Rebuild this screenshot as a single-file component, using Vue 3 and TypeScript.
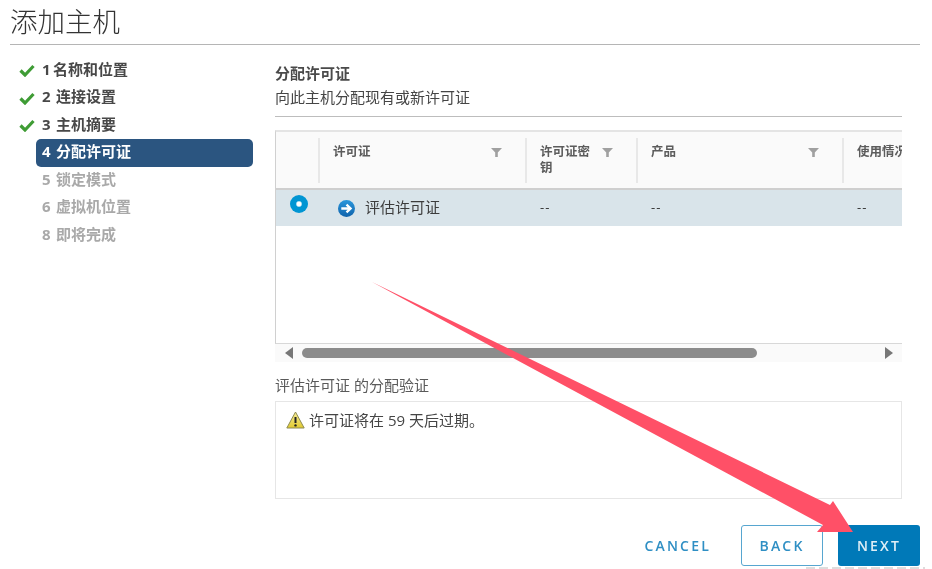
<script setup lang="ts">
interface Step { label: string; state: 'done' | 'active' | 'todo' }
const steps: Step[] = [
  { label: '1 名称和位置', state: 'done' },
  { label: '2 连接设置', state: 'done' },
  { label: '3 主机摘要', state: 'done' },
  { label: '4 分配许可证', state: 'active' },
  { label: '5 锁定模式', state: 'todo' },
  { label: '6 虚拟机位置', state: 'todo' },
  { label: '8 即将完成', state: 'todo' },
]
const columns = [
  { label: '许可证', filter: true },
  { label: '许可证密钥', filter: true },
  { label: '产品', filter: true },
  { label: '使用情况', filter: false },
]
</script>

<template>
  <div class="page">
    <header class="title">添加主机</header>
    <div class="body">
      <nav class="side">
        <div v-for="s in steps" :key="s.label" class="step">
          <span class="tick">
            <svg v-if="s.state === 'done'" width="16" height="13" viewBox="0 0 16 13">
              <path d="M1.5 6.5 L6 11 L14.5 2" fill="none" stroke="#3f9c35" stroke-width="3.2" />
            </svg>
          </span>
          <span class="pill" :class="s.state">{{ s.label }}</span>
        </div>
      </nav>
      <main class="main">
        <h2 class="heading">分配许可证</h2>
        <p class="sub">向此主机分配现有或新许可证</p>
        <div class="rule"></div>
        <section class="table">
          <div class="thead">
            <div class="th-blank"></div>
            <div v-for="c in columns" :key="c.label" class="th">
              <span class="th-label" :class="{ nowrap: !c.filter }">{{ c.label }}</span>
              <svg v-if="c.filter" class="filter" width="11" height="9" viewBox="0 0 11 9">
                <path d="M0 0 H11 L6.8 4.6 V9 H4.2 V4.6 Z" fill="#a0a0a0" />
              </svg>
            </div>
          </div>
          <div class="tr">
            <div class="td-radio"><span class="radio"></span></div>
            <div class="td-name">
              <svg width="17" height="17" viewBox="0 0 17 17">
                <defs>
                  <linearGradient id="go" x1="0" y1="0" x2="0" y2="1">
                    <stop offset="0" stop-color="#2a97dc" />
                    <stop offset="1" stop-color="#0f62ab" />
                  </linearGradient>
                </defs>
                <circle cx="8.5" cy="8.5" r="8.5" fill="url(#go)" />
                <path d="M3.3 8.5 H12 M8.5 4.6 L12.6 8.5 L8.5 12.4" fill="none" stroke="#fff" stroke-width="2.3" />
              </svg>
              <span class="name-text">评估许可证</span>
            </div>
            <div class="td">--</div>
            <div class="td">--</div>
            <div class="td">--</div>
          </div>
          <div class="empty"></div>
        </section>
        <div class="scroll">
          <span class="arrow-left"></span>
          <span class="thumb"></span>
          <span class="arrow-right"></span>
        </div>
        <div class="label">评估许可证 的分配验证</div>
        <div class="box">
          <svg class="warn" width="19" height="18" viewBox="0 0 19 18">
            <defs>
              <linearGradient id="warn" x1="0" y1="0" x2="0" y2="1">
                <stop offset="0" stop-color="#f7ee9a" />
                <stop offset="1" stop-color="#e0c92e" />
              </linearGradient>
            </defs>
            <path d="M9.5 1 L18.2 17 H0.8 Z" fill="url(#warn)" stroke="#8d8a52" stroke-width="1" stroke-linejoin="round" />
            <path d="M9.5 6 V12" stroke="#222" stroke-width="2" />
            <circle cx="9.5" cy="14.4" r="1.2" fill="#222" />
          </svg>
          <span>许可证将在 59 天后过期。</span>
        </div>
      </main>
    </div>
    <footer class="footer">
      <button class="btn cancel">CANCEL</button>
      <button class="btn back">BACK</button>
      <button class="btn next">NEXT</button>
    </footer>
    <svg class="overlay" width="932" height="569" viewBox="0 0 932 569">
      <polygon points="372,282 830,505 833,501 853,532 817,532 823,525" fill="#ff5067" />
      <line x1="806" y1="568" x2="925" y2="568" stroke="#dddddd" stroke-width="2" stroke-dasharray="9 4" />
    </svg>
  </div>
</template>

<style>
html, body { margin: 0; background: #fff; }
</style>

<style scoped>
.page {
  position: relative;
  width: 932px;
  height: 569px;
  overflow: hidden;
  display: flex;
  flex-direction: column;
  background: #fff;
  font-family: "Open Sans", "Noto Sans CJK SC", sans-serif;
  color: #444;
  filter: blur(0.3px);
}
.title {
  height: 44px;
  margin: 0 12px 0 10px;
  border-bottom: 1px solid #b5b5b5;
  font-size: 27.5px;
  font-weight: 300;
  line-height: 44px;
  color: #333;
  flex: none;
}
.body { flex: 1; display: flex; min-height: 0; }
.side { width: 275px; flex: none; padding-top: 12px; box-sizing: border-box; }
.step { display: flex; height: 27.5px; align-items: center; }
.tick { width: 36px; flex: none; padding-left: 19px; box-sizing: border-box; display: flex; align-items: center; }
.pill {
  width: 217px;
  height: 28px;
  line-height: 25px;
  padding-left: 6px;
  box-sizing: border-box;
  border-radius: 5px;
  font-size: 15px;
  font-weight: 700;
  white-space: nowrap;
  word-spacing: 1.5px;
}
.step:first-child .pill { word-spacing: -1.5px; }
.pill.done { color: #484848; }
.pill.active { background: #2b5580; color: #fff; }
.pill.todo { color: #a9a9a9; }
.main { width: 627px; flex: none; padding-top: 18px; box-sizing: border-box; }
.heading { margin: 0; font-size: 15px; line-height: 20px; font-weight: 700; color: #4a4a4a; }
.sub { margin: 4px 0 0; font-size: 15px; line-height: 20px; color: #454545; }
.rule { height: 1px; background: #bdbdbd; margin-top: 9px; }
.table {
  margin-top: 13px;
  border-top: 2px solid #e4e4e4;
  border-left: 1px solid #d0d0d0;
  border-bottom: 1px solid #d8d8d8;
  overflow: hidden;
}
.thead, .tr { display: grid; grid-template-columns: 43px 207px 111px 206px 120px; }
.thead { height: 56px; background: #fafafa; border-bottom: 2px solid #cfcfcf; }
.th { display: flex; align-items: flex-start; padding: 6px 24px 0 13px; margin: 6px 0 5px -1px; border-left: 2px solid #e8e8e8; box-sizing: border-box; }
.th-label { flex: 1; font-size: 12.5px; line-height: 15.5px; font-weight: 700; color: #5c5c5c; }
.th-label.nowrap { white-space: nowrap; }
.filter { flex: none; margin: 4px 0 0 10px; }
.tr { height: 36px; background: #d9e4ea; font-size: 15px; color: #3c3c3c; }
.td-radio { padding: 5px 0 0 14px; }
.radio {
  display: block;
  width: 18px;
  height: 18px;
  border-radius: 50%;
  background: radial-gradient(circle, #fff 0 2px, #0095d3 3.5px);
}
.td-name { display: flex; align-items: center; gap: 10px; padding-left: 19px; }
.name-text { margin-top: -4px; }
.td { display: flex; align-items: center; padding: 0 0 2px 14px; font-size: 13px; letter-spacing: 1px; color: #333; }
.empty { height: 117px; }
.scroll { height: 18px; background: #fafafa; display: flex; align-items: center; padding: 0 9px 0 10px; }
.arrow-left { width: 0; height: 0; border: 6px solid transparent; border-left: 0; border-right: 8px solid #777; }
.arrow-right { width: 0; height: 0; border: 6px solid transparent; border-right: 0; border-left: 8px solid #777; margin-left: auto; }
.thumb { width: 455px; height: 10px; border-radius: 5px; background: #8c8c8c; margin-left: 9px; }
.label { margin-top: 13px; font-size: 15px; line-height: 20px; color: #5a5a5a; }
.box {
  margin-top: 6px;
  height: 98px;
  box-sizing: border-box;
  border: 1px solid #e6e6e6;
  padding: 8px 10px;
  display: flex;
  align-items: flex-start;
  gap: 4px;
  font-size: 15px;
  line-height: 20px;
  color: #454545;
}
.warn { margin-top: 1px; }
.footer { flex: none; display: flex; justify-content: flex-end; gap: 15px; padding: 0 12px 3px 0; }
.btn {
  height: 41px;
  box-sizing: border-box;
  border-radius: 3px;
  font-family: "Open Sans", sans-serif;
  font-size: 14px;
  font-weight: 600;
  letter-spacing: 2.2px;
  background: transparent;
  border: 1px solid transparent;
  color: #0079b8;
}
.cancel { padding: 0 14px 0 16px; color: #2f8fc4; }
.back { width: 82px; border-color: #57a6d0; color: #2f8fc4; }
.next { width: 82px; background: #0079b8; color: #dfeef6; }
.overlay { position: absolute; left: 0; top: 0; pointer-events: none; }
</style>
